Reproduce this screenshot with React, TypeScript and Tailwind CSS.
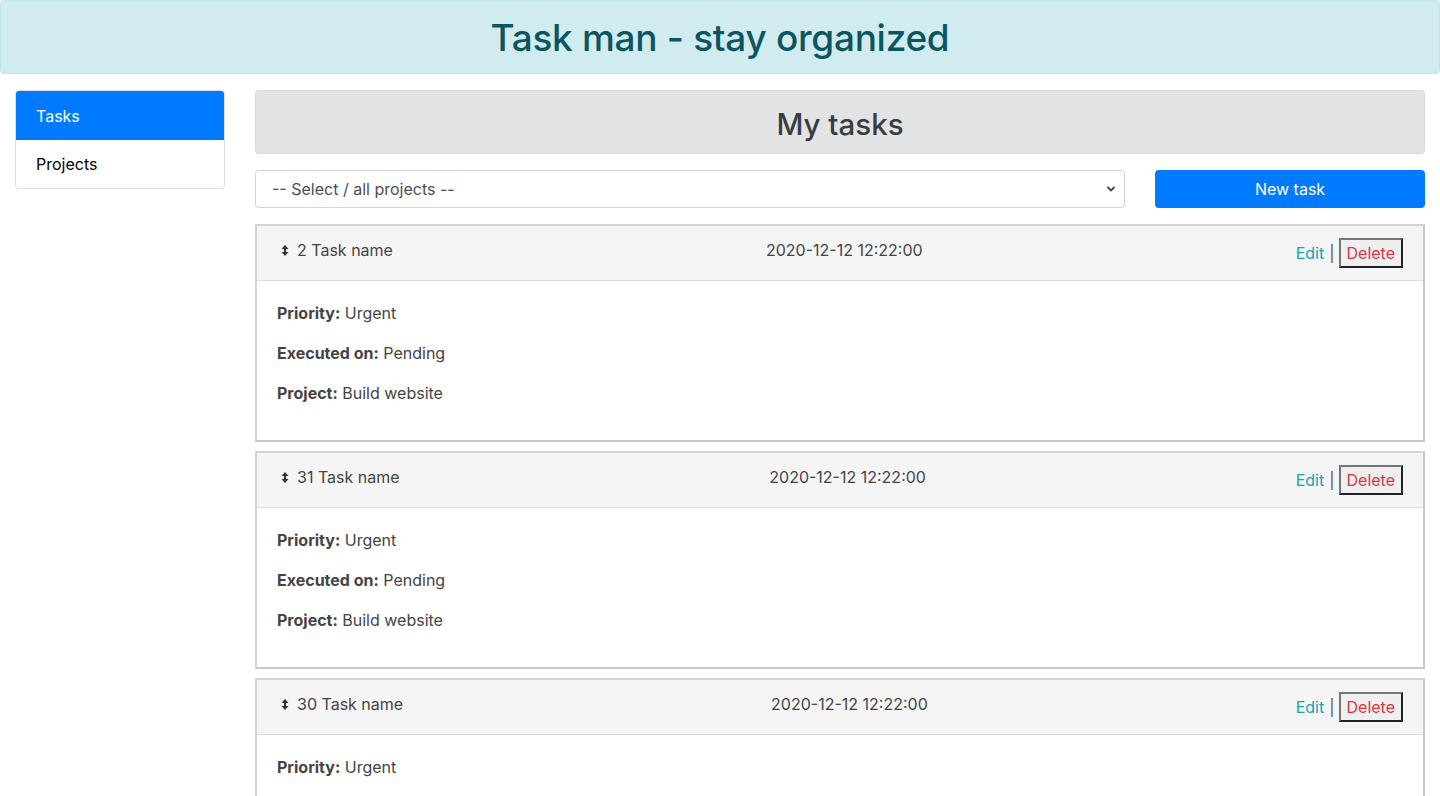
import { useState } from 'react';

type Task = {
  id: number;
  name: string;
  date: string;
  priority: string;
  executedOn: string;
  project: string;
};

const tasks: Task[] = [
  { id: 2, name: 'Task name', date: '2020-12-12 12:22:00', priority: 'Urgent', executedOn: 'Pending', project: 'Build website' },
  { id: 31, name: 'Task name', date: '2020-12-12 12:22:00', priority: 'Urgent', executedOn: 'Pending', project: 'Build website' },
  { id: 30, name: 'Task name', date: '2020-12-12 12:22:00', priority: 'Urgent', executedOn: 'Pending', project: 'Build website' }
];

const SortIcon = () => (
  <svg width="8" height="11" viewBox="0 0 8 11" className="mr-[8px] shrink-0">
    <path d="M4 0 L7.5 4 H0.5 Z" fill="#333" />
    <path d="M4 11 L7.5 7 H0.5 Z" fill="#333" />
    <rect x="3" y="3" width="2" height="5" fill="#333" />
  </svg>
);

const TaskCard = ({ task }: { task: Task }) => (
  <div className="border-2 border-[#d4d4d4] border-b-[#c8c8c8] border-r-[#c8c8c8] mb-[9px]">
    {/* Card header */}
    <div className="flex items-start justify-between bg-[#f5f5f5] border-b border-[#dcdcdc] pl-[24px] pr-[20px] pt-[12px] h-[55px]">
      <span className="flex items-center">
        <SortIcon />
        {task.id} {task.name}
      </span>
      <span>{task.date}</span>
      <span className="flex items-center">
        <a className="text-[#17a2b8] cursor-pointer">Edit</a>
        <span className="text-[#555] ml-[5px] mr-[4px]">|</span>
        <button className="text-[#dc3545] bg-[#efefef] border-2 border-t-[#767676] border-l-[#767676] border-b-[#222] border-r-[#222] px-[6px] h-[30px] leading-[24px]">
          Delete
        </button>
      </span>
    </div>

    {/* Card body */}
    <div className="px-[20px] pt-[20px] pb-[19px]">
      <p className="mb-[16px]"><b className="font-bold">Priority:</b> {task.priority}</p>
      <p className="mb-[16px]"><b className="font-bold">Executed on:</b> {task.executedOn}</p>
      <p className="mb-[16px]"><b className="font-bold">Project:</b> {task.project}</p>
    </div>
  </div>
);

export default function App() {
  const [active, setActive] = useState('tasks');

  return (
    <div className="min-h-screen bg-white text-[16px] leading-[24px] text-[#444] font-['Inter','Liberation_Sans',sans-serif]">
      {/* Header */}
      <div className="bg-[#d1ecf1] border border-[#bee5eb] rounded-[4px] pt-[13px] pb-[11px] mb-[16px]">
        <h1 className="text-center text-[37px] leading-[48px] font-medium text-[#0c5460] tracking-[-0.3px]">
          Task man - stay organized
        </h1>
      </div>

      <div className="flex">
        {/* Sidebar */}
        <div className="w-[240px] px-[15px] shrink-0">
          <div className="border border-[#dfdfdf] rounded-[4px] overflow-hidden">
            <div
              onClick={() => setActive('tasks')}
              className={`px-[20px] h-[49px] flex items-center cursor-pointer ${active === 'tasks' ? 'bg-[#007bff] text-white' : 'text-black'}`}
            >
              Tasks
            </div>
            <div
              onClick={() => setActive('projects')}
              className={`px-[20px] h-[48px] flex items-center cursor-pointer ${active === 'projects' ? 'bg-[#007bff] text-white' : 'text-black'}`}
            >
              Projects
            </div>
          </div>
        </div>

        {/* Main */}
        <div className="flex-1 px-[15px]">
          <div className="bg-[#e2e3e5] border border-[#d6d8db] rounded-[4px] h-[64px] flex items-center justify-center mb-[16px]">
            <h2 className="text-[29.5px] font-medium text-[#383d41] leading-[38px] pt-[3px]">My tasks</h2>
          </div>

          <div className="flex gap-[30px] mb-[16px]">
            <div className="relative w-[870px]">
              <select className="appearance-none w-full h-[38px] border border-[#ced4da] rounded-[4px] bg-white pl-[16px] pr-[32px] text-[#495057] outline-none">
                <option>-- Select / all projects --</option>
                <option>Build website</option>
              </select>
              <svg className="absolute right-[9px] top-[15px] pointer-events-none" width="10" height="8" viewBox="0 0 10 8">
                <path d="M1.5 2 L5 5.5 L8.5 2" stroke="#444" strokeWidth="1.8" fill="none" />
              </svg>
            </div>
            <button className="flex-1 h-[38px] bg-[#007bff] text-white rounded-[4px]">New task</button>
          </div>

          {tasks.map(t => (
            <TaskCard key={t.id} task={t} />
          ))}
        </div>
      </div>
    </div>
  );
}
